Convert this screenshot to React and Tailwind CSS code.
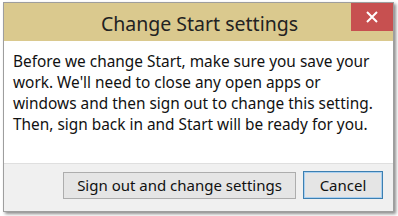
export default function App() {
  return (
    <div className="w-[398px] h-[216px] bg-white relative" style={{ fontFamily: '"Noto Sans", "Open Sans", sans-serif' }}>
      <div className="absolute left-[3px] top-[2px] w-[391px] h-[210px] border border-[#9e9e9e] bg-[#dac98e] flex flex-col shadow-[2px_2px_3px_rgba(0,0,0,0.45)]">
        <div className="h-[38px] shrink-0 flex items-start justify-center relative">
          <span className="text-[19.5px] leading-none text-[#222] mt-[11px] ml-[2px]">Change Start settings</span>
          <button className="absolute right-0 top-0 w-[42px] h-[28px] bg-[#c75050] flex items-center justify-center">
            <svg width="12" height="12" viewBox="0 0 12 12">
              <path d="M1 1 L11 11 M11 1 L1 11" stroke="white" strokeWidth="2" />
            </svg>
          </button>
        </div>
        <div className="bg-white flex-1 flex flex-col">
          <div className="bg-white pl-[9px] pr-[16px] pt-[10px] h-[122px] text-[15.4px] leading-[21px] text-[#111]">
            Before we change Start, make sure you save your work. We'll need to close any open apps or windows and then sign out to change this setting. Then, sign back in and Start will be ready for you.
          </div>
          <div className="flex-1 bg-[#f0f0f0] border-t border-[#dfdfdf] flex justify-end items-start pt-[8px] pr-[10px] gap-[7px]">
            <button className="h-[27px] w-[233px] border border-[#adadad] bg-[#e5e5e5] text-[15px] text-[#111]">Sign out and change settings</button>
            <button className="h-[28px] w-[80px] border border-[#3c7fb1] bg-[#e5e5e5] text-[15px] text-[#111] -mt-[1px] outline outline-1 outline-[#aad0f0] -outline-offset-2">Cancel</button>
          </div>
        </div>
      </div>
    </div>
  );
}
